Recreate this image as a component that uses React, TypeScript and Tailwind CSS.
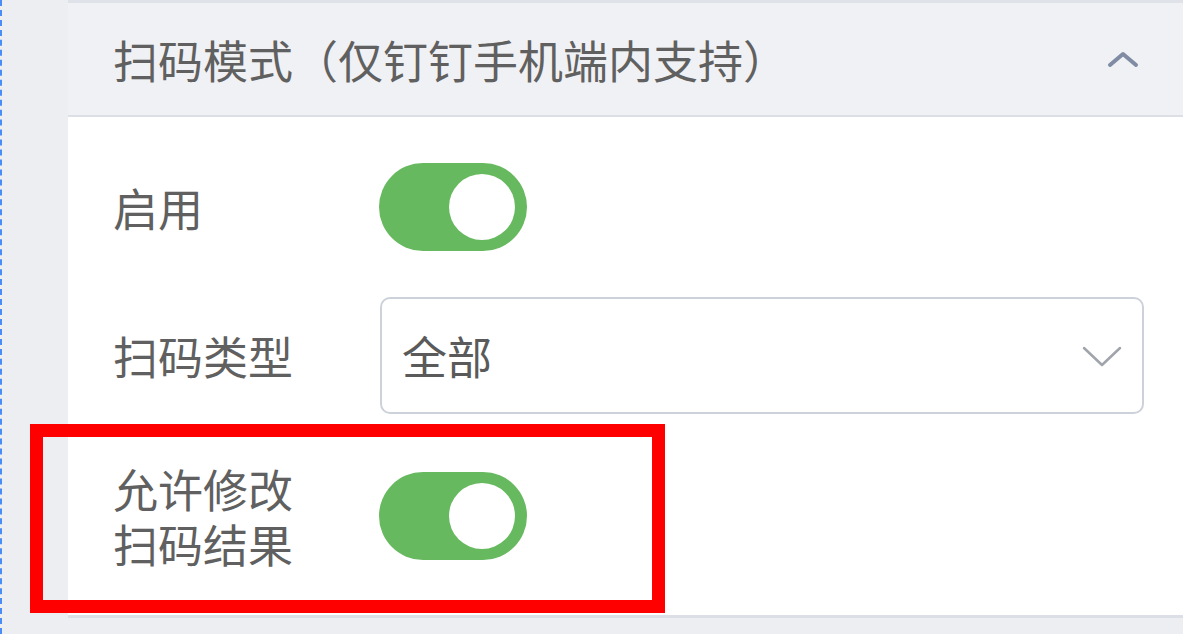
import React from "react";

function Toggle() {
  return (
    <div className="flex h-[88px] w-[148px] items-center justify-end rounded-full bg-[#66b95e] pr-[12px]">
      <div className="h-[66px] w-[66px] rounded-full bg-white" />
    </div>
  );
}

export default function App() {
  const font = { fontFamily: '"Noto Sans CJK SC", "Noto Sans", sans-serif' };
  return (
    <div className="relative flex h-[634px] w-[1183px] overflow-hidden bg-[#eceef2]" style={font}>
      <div className="h-full w-[68px] shrink-0 border-l-2 border-dashed border-[#4a8ef5] bg-[#eceef2]" />
      <div className="flex h-full flex-1 flex-col">
        <div className="h-[3px] bg-[#dfe2e8]" />
        <div className="flex h-[114px] items-center justify-between border-b-2 border-[#dcdfe6] bg-[#f0f1f4] pl-[45px] pr-[44px]">
          <span className="text-[45px] leading-none text-[#606060]">扫码模式（仅钉钉手机端内支持）</span>
          <svg width="32" height="18" viewBox="0 0 32 18" fill="none">
            <path d="M3 15 L16 4 L29 15" stroke="#7f8ca3" strokeWidth="4" strokeLinecap="round" strokeLinejoin="round" />
          </svg>
        </div>
        <div className="flex h-[498px] flex-col bg-white pl-[45px] pr-[39px] pt-[46px]">
          <div className="flex h-[88px] items-center">
            <div className="w-[266px] text-[45px] leading-none text-[#606060]">启用</div>
            <Toggle />
          </div>
          <div className="mt-[46px] flex h-[117px] items-center">
            <div className="w-[267px] text-[45px] leading-none text-[#606060]">扫码类型</div>
            <div className="flex h-full flex-1 items-center justify-between rounded-[10px] border-2 border-[#cdd1d9] bg-white pl-[20px] pr-[20px]">
              <span className="text-[45px] leading-none text-[#5a5a5a]">全部</span>
              <svg width="40" height="22" viewBox="0 0 40 22" fill="none">
                <path d="M2 3 L20 20 L38 3" stroke="#a0a4ab" strokeWidth="2.5" strokeLinecap="round" strokeLinejoin="round" />
              </svg>
            </div>
          </div>
          <div className="mt-[58px] flex h-[88px] items-center">
            <div className="flex w-[266px] flex-col gap-[10px] text-[45px] leading-none text-[#606060]">
              <div>允许修改</div>
              <div>扫码结果</div>
            </div>
            <Toggle />
          </div>
        </div>
        <div className="h-[3px] bg-[#dcdfe6]" />
        <div className="flex-1 bg-[#eceef2]" />
      </div>
      <div className="absolute left-[30px] top-[424px] h-[189px] w-[635px] border-[13px] border-[#ff0000]" />
    </div>
  );
}
